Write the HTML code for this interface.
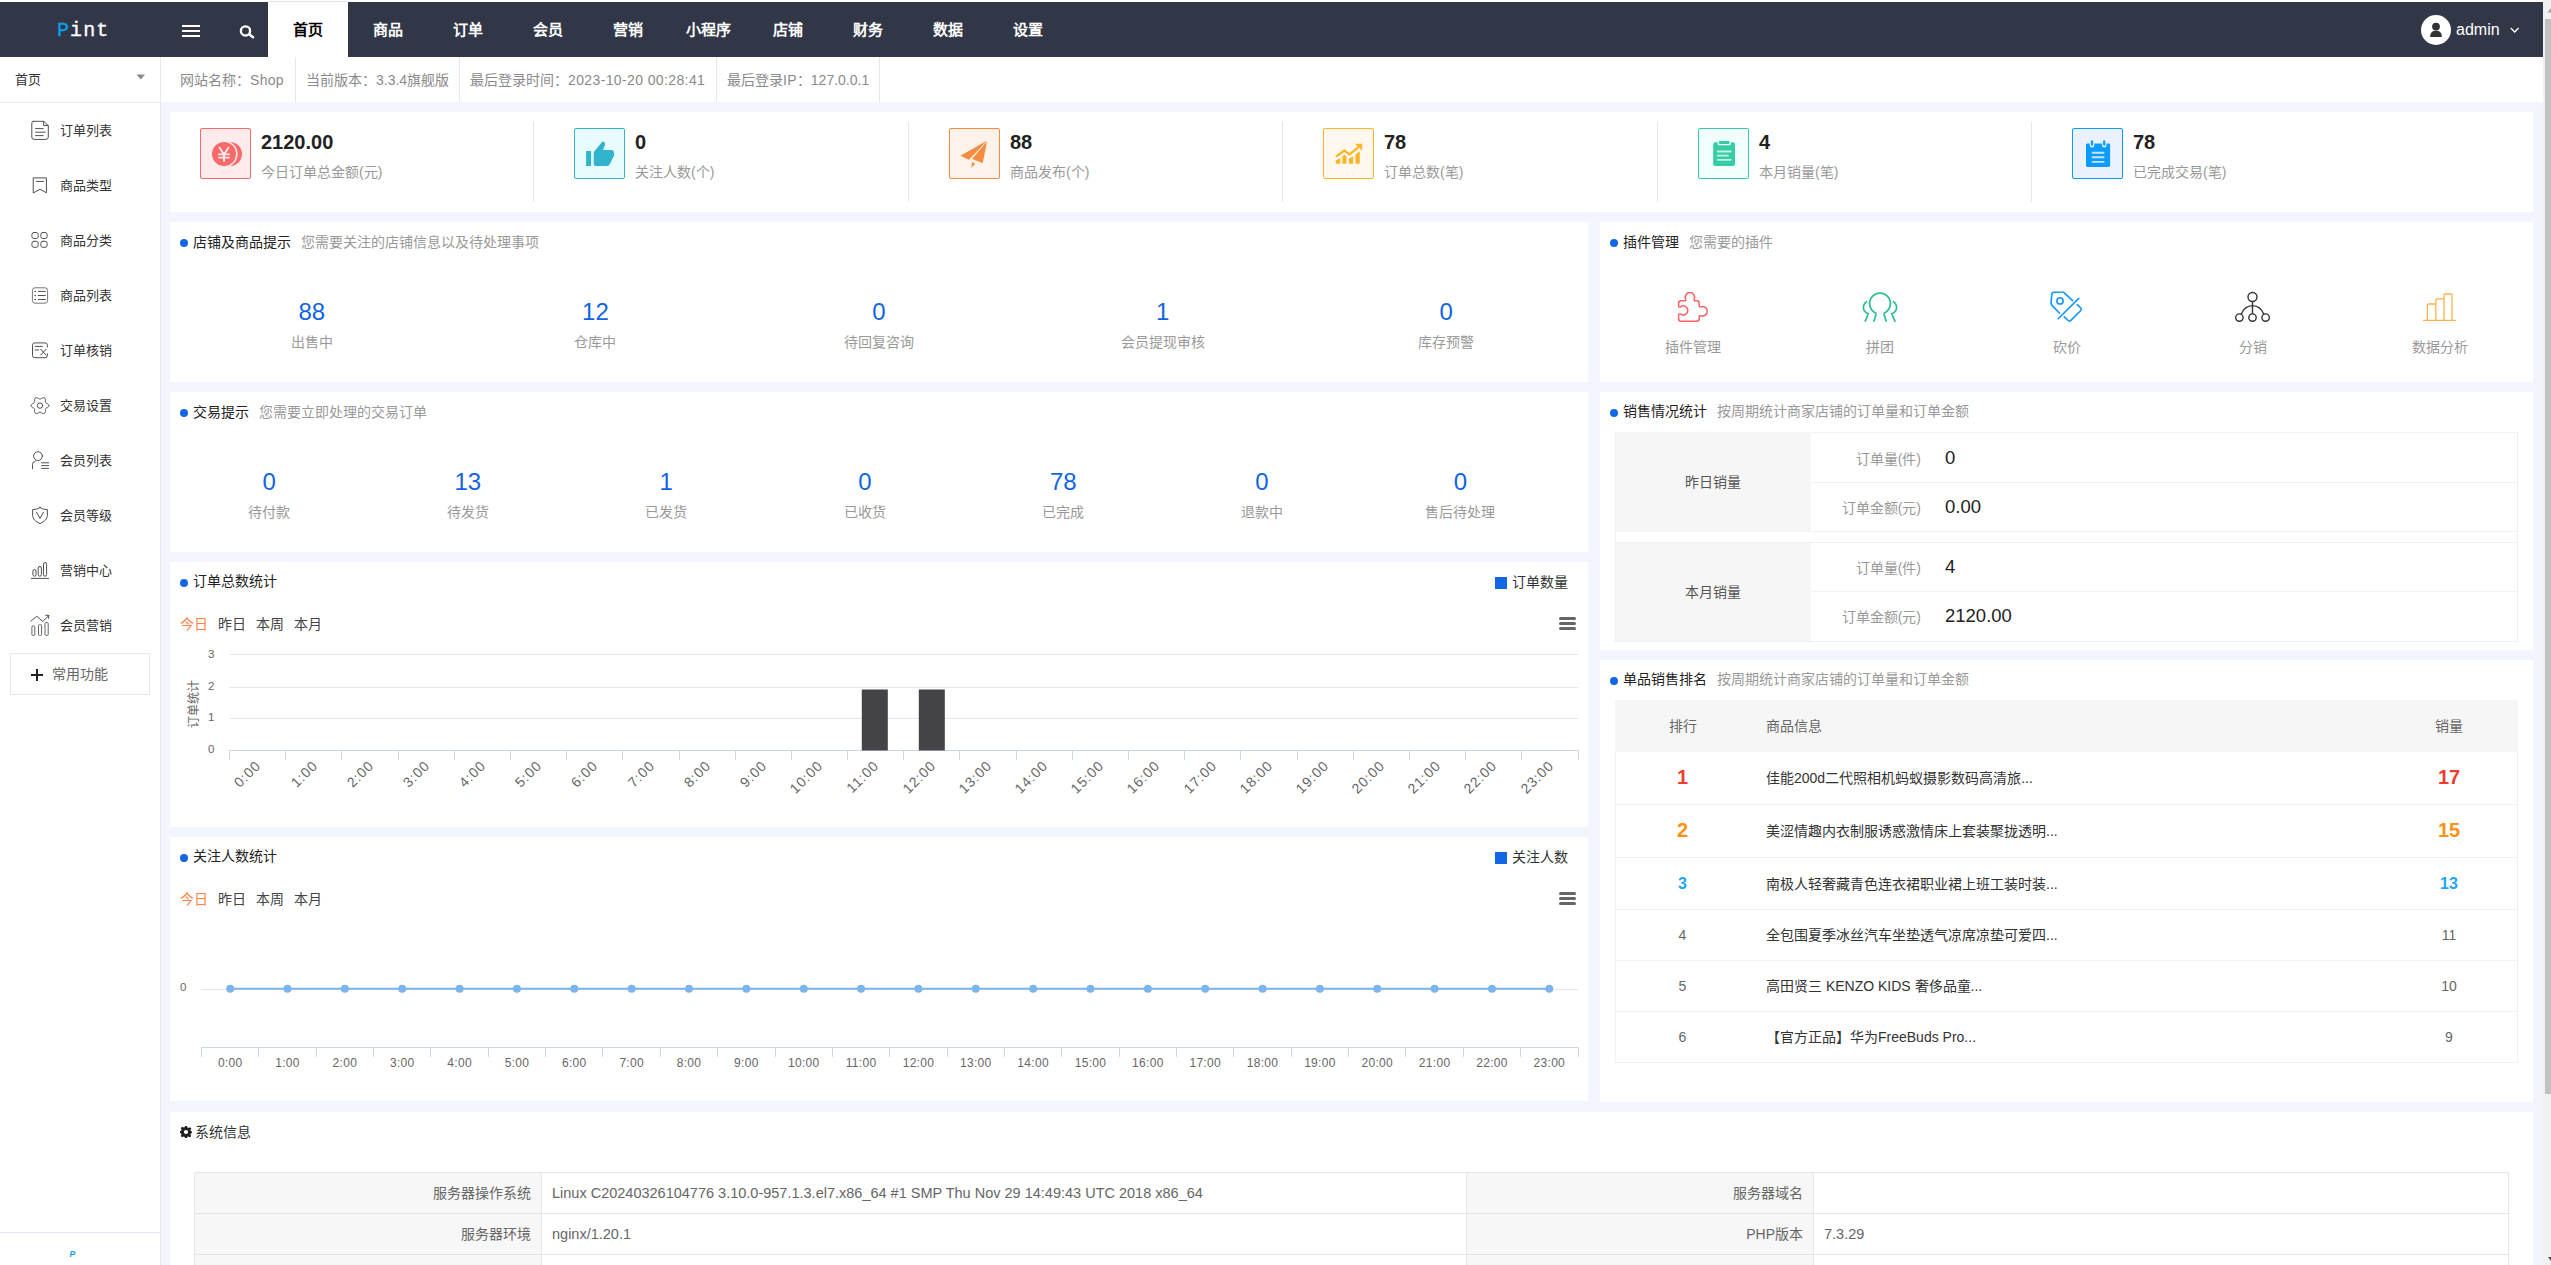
<!DOCTYPE html>
<html lang="zh-CN">
<head>
<meta charset="utf-8">
<title>Pint</title>
<style>
html,body{margin:0;padding:0;}
html{width:2551px;height:1265px;}
body{width:2551px;height:1265px;position:relative;background:#f2f5fd;font-family:"Liberation Sans",sans-serif;}
.t{position:absolute;white-space:nowrap;}
.r{position:absolute;}
svg{position:absolute;overflow:visible;}
i{display:inline-block;width:1em;text-align:center;font-style:normal;}
.mono{font-family:"Liberation Mono",monospace;}
</style>
</head>
<body>
<div class="r" style="left:0px;top:0px;width:2551px;height:2px;background:#fff;"></div>
<div class="r" style="left:0px;top:2px;width:2543px;height:55px;background:#323748;"></div>
<div class="r" style="left:268px;top:1px;width:80px;height:1px;background:#e2e4e3;"></div>
<div class="r" style="left:268px;top:2px;width:80px;height:55px;background:#fff;"></div>
<div class="t mono" style="left:57px;top:18.6px;font-size:20px;line-height:24px;letter-spacing:1.1px;color:#fff;-webkit-text-stroke:0.35px #fff;"><span style="color:#0aa1e6;-webkit-text-stroke:0.3px #0aa1e6;">P</span>int</div>
<div class="r" style="left:182px;top:25px;width:18px;height:2px;background:#fff;"></div>
<div class="r" style="left:182px;top:30px;width:18px;height:2px;background:#fff;"></div>
<div class="r" style="left:182px;top:35px;width:18px;height:2px;background:#fff;"></div>
<svg style="left:238px;top:23px" width="18" height="18" viewBox="0 0 18 18"><circle cx="7.5" cy="7.9" r="4.6" fill="none" stroke="#fff" stroke-width="2.3"/><path d="M11.3 11.3 L15 14.2" stroke="#fff" stroke-width="2.6" stroke-linecap="round"/></svg>
<div class="t" style="left:268.0px;top:19.5px;font-size:15px;line-height:20px;color:#000;font-weight:bold;width:80px;text-align:center;"><i>首</i><i>页</i></div>
<div class="t" style="left:348.0px;top:19.5px;font-size:15px;line-height:20px;color:#fff;font-weight:bold;width:80px;text-align:center;"><i>商</i><i>品</i></div>
<div class="t" style="left:428.0px;top:19.5px;font-size:15px;line-height:20px;color:#fff;font-weight:bold;width:80px;text-align:center;"><i>订</i><i>单</i></div>
<div class="t" style="left:508.0px;top:19.5px;font-size:15px;line-height:20px;color:#fff;font-weight:bold;width:80px;text-align:center;"><i>会</i><i>员</i></div>
<div class="t" style="left:588.0px;top:19.5px;font-size:15px;line-height:20px;color:#fff;font-weight:bold;width:80px;text-align:center;"><i>营</i><i>销</i></div>
<div class="t" style="left:668.0px;top:19.5px;font-size:15px;line-height:20px;color:#fff;font-weight:bold;width:80px;text-align:center;"><i>小</i><i>程</i><i>序</i></div>
<div class="t" style="left:748.0px;top:19.5px;font-size:15px;line-height:20px;color:#fff;font-weight:bold;width:80px;text-align:center;"><i>店</i><i>铺</i></div>
<div class="t" style="left:828.0px;top:19.5px;font-size:15px;line-height:20px;color:#fff;font-weight:bold;width:80px;text-align:center;"><i>财</i><i>务</i></div>
<div class="t" style="left:908.0px;top:19.5px;font-size:15px;line-height:20px;color:#fff;font-weight:bold;width:80px;text-align:center;"><i>数</i><i>据</i></div>
<div class="t" style="left:988.0px;top:19.5px;font-size:15px;line-height:20px;color:#fff;font-weight:bold;width:80px;text-align:center;"><i>设</i><i>置</i></div>
<svg style="left:2421px;top:15px" width="30" height="30" viewBox="0 0 30 30"><circle cx="15" cy="15" r="15" fill="#fff"/><circle cx="15" cy="11.6" r="3.9" fill="#333"/><path d="M9.2 22 C9.2 17.2 11.5 15.8 15 15.8 C18.5 15.8 20.8 17.2 20.8 22 Z" fill="#333"/></svg>
<div class="t" style="left:2456px;top:19.5px;font-size:16px;line-height:20px;color:#fff;">admin</div>
<svg style="left:2510px;top:27px" width="10" height="7" viewBox="0 0 10 7"><path d="M0.8 1 L4.7 5 L8.6 1" fill="none" stroke="#fff" stroke-width="1.3"/></svg>
<div class="r" style="left:2543px;top:0px;width:8px;height:1265px;background:#f1f1f1;"></div>
<div class="r" style="left:2545px;top:19px;width:6px;height:1075px;background:#c1c1c1;"></div>
<svg style="left:2543px;top:0" width="8" height="1265" viewBox="0 0 8 1265"><path d="M8 8 L4.5 12.5 L8 12.5 Z" fill="#a3a3a3"/><path d="M5 1257 L8 1257 L8 1261 Z" fill="#505050"/></svg>
<div class="r" style="left:0px;top:57px;width:160px;height:1208px;background:#fff;"></div>
<div class="r" style="left:160px;top:57px;width:1px;height:1208px;background:#e6e8ee;"></div>
<div class="r" style="left:0px;top:102px;width:160px;height:1px;background:#ececec;"></div>
<div class="t" style="left:15px;top:69.5px;font-size:13px;line-height:20px;color:#333;"><i>首</i><i>页</i></div>
<svg style="left:136px;top:74px" width="10" height="6" viewBox="0 0 10 6"><path d="M0.5 0.6 L9 0.6 L4.75 5.4 Z" fill="#8a8a8a"/></svg>
<div class="t" style="left:60px;top:121px;font-size:13px;line-height:20px;color:#333;"><i>订</i><i>单</i><i>列</i><i>表</i></div>
<div class="t" style="left:60px;top:176px;font-size:13px;line-height:20px;color:#333;"><i>商</i><i>品</i><i>类</i><i>型</i></div>
<div class="t" style="left:60px;top:231px;font-size:13px;line-height:20px;color:#333;"><i>商</i><i>品</i><i>分</i><i>类</i></div>
<div class="t" style="left:60px;top:286px;font-size:13px;line-height:20px;color:#333;"><i>商</i><i>品</i><i>列</i><i>表</i></div>
<div class="t" style="left:60px;top:341px;font-size:13px;line-height:20px;color:#333;"><i>订</i><i>单</i><i>核</i><i>销</i></div>
<div class="t" style="left:60px;top:396px;font-size:13px;line-height:20px;color:#333;"><i>交</i><i>易</i><i>设</i><i>置</i></div>
<div class="t" style="left:60px;top:451px;font-size:13px;line-height:20px;color:#333;"><i>会</i><i>员</i><i>列</i><i>表</i></div>
<div class="t" style="left:60px;top:506px;font-size:13px;line-height:20px;color:#333;"><i>会</i><i>员</i><i>等</i><i>级</i></div>
<div class="t" style="left:60px;top:561px;font-size:13px;line-height:20px;color:#333;"><i>营</i><i>销</i><i>中</i><i>心</i></div>
<div class="t" style="left:60px;top:616px;font-size:13px;line-height:20px;color:#333;"><i>会</i><i>员</i><i>营</i><i>销</i></div>
<svg style="left:0;top:0" width="160" height="700" viewBox="0 0 160 700"><path fill="none" stroke="#505050" stroke-width="1" stroke-linecap="round" stroke-linejoin="round" d="M33.6 121.3 H43.6 L48.3 125.6 V137 Q48.3 139.4 45.9 139.4 H34.2 Q31.8 139.4 31.8 137 V123.2 Q31.8 121.3 33.6 121.3 Z M43.6 121.5 V125.5 H48.2 M35.6 128.6 H43.2 M35.6 132.2 H45.2 M35.6 135.6 H43.2"/><path fill="none" stroke="#505050" stroke-width="1" stroke-linecap="round" stroke-linejoin="round" stroke-linejoin="miter" d="M33.6 177.9 H46.4 V192.8 L40 189.2 L33.6 192.8 Z M36.6 181.4 H43.4"/><rect fill="none" stroke="#505050" stroke-width="1" stroke-linecap="round" stroke-linejoin="round" x="31.9" y="232.5" width="6.3" height="6" rx="2" ry="2"/><rect fill="none" stroke="#505050" stroke-width="1" stroke-linecap="round" stroke-linejoin="round" x="40.8" y="232.5" width="6.3" height="6" rx="2" ry="2"/><rect fill="none" stroke="#505050" stroke-width="1" stroke-linecap="round" stroke-linejoin="round" x="31.9" y="241.3" width="6.3" height="6" rx="2" ry="2"/><rect fill="none" stroke="#505050" stroke-width="1" stroke-linecap="round" stroke-linejoin="round" x="40.8" y="241.3" width="6.3" height="6" rx="2" ry="2"/><rect fill="none" stroke="#777" stroke-width="1" x="32.4" y="287.8" width="15.2" height="15.4" rx="2.6"/><path fill="none" stroke="#505050" stroke-width="1" stroke-linecap="round" stroke-linejoin="round" d="M38.2 291.4 H45.4 M38.2 295.5 H45.4 M38.2 299.5 H45.4"/><circle cx="35.2" cy="291.4" r="0.75" fill="#3c3c3c"/><circle cx="35.2" cy="295.5" r="0.75" fill="#3c3c3c"/><circle cx="35.2" cy="299.5" r="0.75" fill="#3c3c3c"/><path fill="none" stroke="#505050" stroke-width="1" stroke-linecap="round" stroke-linejoin="round" d="M47.4 347 V345.2 Q47.4 342.9 45 342.9 H34.9 Q32.5 342.9 32.5 345.2 V355.4 Q32.5 357.7 34.9 357.7 H45 Q47.4 357.7 47.4 355.4 V353.9 M35.2 346.4 H42.4 M35.2 350 H38.6 M40.6 349.2 L46.1 355.1 M46.1 349.2 L40.6 355.1"/><polygon fill="none" stroke="#505050" stroke-width="1" stroke-linecap="round" stroke-linejoin="round" points="48.95,405.60 48.82,406.22 48.45,406.79 47.91,407.28 47.28,407.69 46.65,408.02 46.11,408.32 45.72,408.64 45.49,409.03 45.41,409.53 45.42,410.15 45.44,410.86 45.41,411.61 45.26,412.33 44.94,412.93 44.48,413.35 43.88,413.55 43.20,413.51 42.50,413.29 41.83,412.94 41.23,412.57 40.70,412.25 40.23,412.07 39.77,412.07 39.30,412.25 38.77,412.57 38.17,412.94 37.50,413.29 36.80,413.51 36.12,413.55 35.53,413.35 35.06,412.93 34.74,412.33 34.59,411.61 34.56,410.86 34.58,410.15 34.59,409.53 34.51,409.03 34.28,408.64 33.89,408.32 33.35,408.02 32.72,407.69 32.09,407.28 31.55,406.79 31.18,406.22 31.05,405.60 31.18,404.98 31.55,404.41 32.09,403.92 32.72,403.51 33.35,403.18 33.89,402.88 34.28,402.56 34.51,402.17 34.59,401.67 34.58,401.05 34.56,400.34 34.59,399.59 34.74,398.87 35.06,398.27 35.52,397.85 36.12,397.65 36.80,397.69 37.50,397.91 38.17,398.26 38.77,398.63 39.30,398.95 39.77,399.13 40.23,399.13 40.70,398.95 41.23,398.63 41.83,398.26 42.50,397.91 43.20,397.69 43.88,397.65 44.48,397.85 44.94,398.27 45.26,398.87 45.41,399.59 45.44,400.34 45.42,401.05 45.41,401.67 45.49,402.17 45.72,402.56 46.11,402.88 46.65,403.18 47.28,403.51 47.91,403.92 48.45,404.41 48.82,404.98"/><circle fill="none" stroke="#505050" stroke-width="1" stroke-linecap="round" stroke-linejoin="round" cx="40" cy="405.6" r="2.7"/><circle fill="none" stroke="#505050" stroke-width="1" stroke-linecap="round" stroke-linejoin="round" cx="38" cy="456.1" r="4.4"/><path fill="none" stroke="#505050" stroke-width="1" stroke-linecap="round" stroke-linejoin="round" d="M32.5 468.7 V464.6 Q32.5 461.3 35.3 461.1 M41.6 462.8 H48.6 M41.6 465.6 H48.6 M41.6 468.4 H48.6"/><path fill="none" stroke="#505050" stroke-width="1" stroke-linecap="round" stroke-linejoin="round" d="M40 507.6 Q42.6 509.5 47.4 509.6 V515.5 Q47.2 520.5 40 523.6 Q32.8 520.5 32.6 515.5 V509.6 Q37.4 509.5 40 507.6 Z M36.6 512.3 L40 518.4 L43.4 512.3"/><path fill="none" stroke="#505050" stroke-width="1" stroke-linecap="round" stroke-linejoin="round" stroke-width="1.3" d="M31.4 578.4 H48.6"/><rect fill="none" stroke="#505050" stroke-width="1" stroke-linecap="round" stroke-linejoin="round" x="32.9" y="569.5" width="3.1" height="6.7" rx="1.55"/><rect fill="none" stroke="#505050" stroke-width="1" stroke-linecap="round" stroke-linejoin="round" x="38.2" y="566.5" width="3.2" height="9.7" rx="1.55"/><rect fill="none" stroke="#505050" stroke-width="1" stroke-linecap="round" stroke-linejoin="round" x="43.5" y="562.5" width="3.1" height="13.7" rx="1.55"/><rect fill="none" stroke="#666" stroke-width="1" x="31.9" y="626" width="2.9" height="9.4" rx="0.8"/><rect fill="none" stroke="#666" stroke-width="1" x="38.5" y="624.7" width="3.1" height="10.7" rx="0.8"/><rect fill="none" stroke="#666" stroke-width="1" x="45" y="622.6" width="3.2" height="12.8" rx="0.8"/><path fill="none" stroke="#505050" stroke-width="1" stroke-linecap="round" stroke-linejoin="round" stroke-width="1" d="M30.9 621.1 L36.8 616.3 L42.8 621.5 L48.7 615.6 M45.6 615.3 L48.9 615.4 L48.5 618.4"/></svg>
<div class="r" style="left:10px;top:653px;width:138px;height:40px;background:#fff;border:1px solid #e4e7f0;"></div>
<div class="r" style="left:31px;top:674px;width:12px;height:2px;background:#222;"></div>
<div class="r" style="left:36px;top:669px;width:2px;height:12px;background:#222;"></div>
<div class="t" style="left:52px;top:663.8px;font-size:14px;line-height:20px;color:#666;"><i>常</i><i>用</i><i>功</i><i>能</i></div>
<div class="r" style="left:0px;top:1232px;width:160px;height:1px;background:#e4e8f0;"></div>
<div class="t" style="left:69.5px;top:1248px;font-size:8.5px;line-height:12px;font-weight:bold;font-style:italic;color:#10a0dc;">P</div>
<div class="r" style="left:161px;top:57px;width:2382px;height:45px;background:#fff;"></div>
<div class="t" style="left:180px;top:69.5px;font-size:14px;line-height:20px;color:#8a8a8a;"><i>网</i><i>站</i><i>名</i><i>称</i><i>：</i><span style="letter-spacing:0.3px">Shop</span></div>
<div class="t" style="left:306px;top:69.5px;font-size:14px;line-height:20px;color:#8a8a8a;"><i>当</i><i>前</i><i>版</i><i>本</i><i>：</i>3.3.4<i>旗</i><i>舰</i><i>版</i></div>
<div class="t" style="left:470px;top:69.5px;font-size:14px;line-height:20px;color:#8a8a8a;"><i>最</i><i>后</i><i>登</i><i>录</i><i>时</i><i>间</i><i>：</i><span style="letter-spacing:0.38px">2023-10-20 00:28:41</span></div>
<div class="t" style="left:727px;top:69.5px;font-size:14px;line-height:20px;color:#8a8a8a;"><i>最</i><i>后</i><i>登</i><i>录</i><span style="letter-spacing:0.3px">IP</span><i>：</i>127.0.0.1</div>
<div class="r" style="left:295px;top:57px;width:1px;height:45px;background:#e6e6e6;"></div>
<div class="r" style="left:459px;top:57px;width:1px;height:45px;background:#e6e6e6;"></div>
<div class="r" style="left:716px;top:57px;width:1px;height:45px;background:#e6e6e6;"></div>
<div class="r" style="left:879px;top:57px;width:1px;height:45px;background:#e6e6e6;"></div>
<div class="r" style="left:170px;top:112px;width:2363px;height:100px;background:#fff;"></div>
<div class="r" style="left:200px;top:128px;width:49px;height:49px;background:#ffebeb;border:1px solid #f96a6a;border-radius:2px;"></div>
<svg style="left:200px;top:128px" width="51" height="51" viewBox="0 0 51 51"><circle cx="30" cy="26" r="12" fill="#f96a6a"/><circle cx="24" cy="26" r="13.6" fill="#ffebeb"/><circle cx="24" cy="26" r="12" fill="#f96a6a"/>
<path d="M19.6 19.8 L24 26.6 L28.4 19.8 M19 26.4 H29 M19 29.6 H29 M24 26.6 V33" fill="none" stroke="#ffebeb" stroke-width="1.9" stroke-linecap="round"/></svg>
<div class="t" style="left:261px;top:130px;font-size:20px;line-height:24px;color:#222;font-weight:bold;">2120.00</div>
<div class="t" style="left:261px;top:162px;font-size:14px;line-height:20px;color:#999;"><i>今</i><i>日</i><i>订</i><i>单</i><i>总</i><i>金</i><i>额</i>(<i>元</i>)</div>
<div class="r" style="left:574px;top:128px;width:49px;height:49px;background:#e8fbff;border:1px solid #33b4ce;border-radius:2px;"></div>
<svg style="left:574px;top:128px" width="51" height="51" viewBox="0 0 51 51"><rect x="12.1" y="23" width="5" height="15" fill="#33b4ce"/>
<path d="M19.7 25.2 Q19.7 24 20.6 23 L28 14 Q29.4 12.6 30.6 14.4 Q31.4 15.6 31 17 L29 22 H37.4 Q40 22.2 40 25 V26.6 Q40 27.6 39.6 28.4 L35.6 36.6 Q34.8 38 33 38 H22.4 Q19.7 38 19.7 35.4 Z" fill="#33b4ce"/></svg>
<div class="t" style="left:635px;top:130px;font-size:20px;line-height:24px;color:#222;font-weight:bold;">0</div>
<div class="t" style="left:635px;top:162px;font-size:14px;line-height:20px;color:#999;"><i>关</i><i>注</i><i>人</i><i>数</i>(<i>个</i>)</div>
<div class="r" style="left:533px;top:122px;width:1px;height:80px;background:#e6e6e6;"></div>
<div class="r" style="left:949px;top:128px;width:49px;height:49px;background:#fff2ea;border:1px solid #f88b3d;border-radius:2px;"></div>
<svg style="left:949px;top:128px" width="51" height="51" viewBox="0 0 51 51"><path d="M38 12.8 L11.4 27.8 L19.9 31.7 Z" fill="#f88b3d"/><path d="M38.1 13.2 L23.1 31.1 L33.7 35 Z" fill="#f88b3d"/><path d="M23 33.9 L26.2 35.8 L22.4 39.7 Z" fill="#f88b3d"/></svg>
<div class="t" style="left:1010px;top:130px;font-size:20px;line-height:24px;color:#222;font-weight:bold;">88</div>
<div class="t" style="left:1010px;top:162px;font-size:14px;line-height:20px;color:#999;"><i>商</i><i>品</i><i>发</i><i>布</i>(<i>个</i>)</div>
<div class="r" style="left:908px;top:122px;width:1px;height:80px;background:#e6e6e6;"></div>
<div class="r" style="left:1323px;top:128px;width:49px;height:49px;background:#fff8ee;border:1px solid #fdb528;border-radius:2px;"></div>
<svg style="left:1323px;top:128px" width="51" height="51" viewBox="0 0 51 51"><path d="M12.8 32.4 L17.3 30 V35.8 H12.8 Z M19.4 28.4 L21.45 26.6 L23.5 28.4 V35.8 H19.4 Z M25.9 30.6 L30.1 28.4 V35.8 H25.9 Z M32.5 26.3 L36.8 23.2 V35.8 H32.5 Z" fill="#fdb528"/>
<path d="M12.9 28.6 L21.4 22.5 L26.4 26.4 L35.6 19.2" fill="none" stroke="#fdb528" stroke-width="2.3"/><path d="M31.8 15.8 H39.2 V22.8 Z" fill="#fdb528"/></svg>
<div class="t" style="left:1384px;top:130px;font-size:20px;line-height:24px;color:#222;font-weight:bold;">78</div>
<div class="t" style="left:1384px;top:162px;font-size:14px;line-height:20px;color:#999;"><i>订</i><i>单</i><i>总</i><i>数</i>(<i>笔</i>)</div>
<div class="r" style="left:1282px;top:122px;width:1px;height:80px;background:#e6e6e6;"></div>
<div class="r" style="left:1698px;top:128px;width:49px;height:49px;background:#f0fffb;border:1px solid #35cca6;border-radius:2px;"></div>
<svg style="left:1698px;top:128px" width="51" height="51" viewBox="0 0 51 51"><rect x="15.2" y="14.2" width="21.8" height="23.8" rx="2.2" fill="#35cca6"/><rect x="19.6" y="12.4" width="13.2" height="4.8" rx="1.2" fill="#f0fffb"/><rect x="20.7" y="13" width="11" height="3" rx="1.4" fill="#35cca6"/>
<path d="M19.6 23.5 H32.8 M19.6 27.7 H30 M19.6 31.8 H32.8" stroke="#c4f2e5" stroke-width="1.8" stroke-linecap="round"/></svg>
<div class="t" style="left:1759px;top:130px;font-size:20px;line-height:24px;color:#222;font-weight:bold;">4</div>
<div class="t" style="left:1759px;top:162px;font-size:14px;line-height:20px;color:#999;"><i>本</i><i>月</i><i>销</i><i>量</i>(<i>笔</i>)</div>
<div class="r" style="left:1657px;top:122px;width:1px;height:80px;background:#e6e6e6;"></div>
<div class="r" style="left:2072px;top:128px;width:49px;height:49px;background:#eaf2ff;border:1px solid #0c9cff;border-radius:2px;"></div>
<svg style="left:2072px;top:128px" width="51" height="51" viewBox="0 0 51 51"><rect x="14" y="15.4" width="24.1" height="23.5" rx="1.4" fill="#0c9cff"/>
<path d="M20 12.8 V17.2 M32.2 12.8 V17.2" stroke="#eaf2ff" stroke-width="4.6" stroke-linecap="round"/><path d="M20 13.4 V16.8 M32.2 13.4 V16.8" stroke="#0c9cff" stroke-width="2.3" stroke-linecap="round"/>
<path d="M20.6 24.7 H31.6 M20.6 29.3 H31.6 M20.6 33.9 H31.6" stroke="#c6e4ff" stroke-width="1.9" stroke-linecap="round"/></svg>
<div class="t" style="left:2133px;top:130px;font-size:20px;line-height:24px;color:#222;font-weight:bold;">78</div>
<div class="t" style="left:2133px;top:162px;font-size:14px;line-height:20px;color:#999;"><i>已</i><i>完</i><i>成</i><i>交</i><i>易</i>(<i>笔</i>)</div>
<div class="r" style="left:2031px;top:122px;width:1px;height:80px;background:#e6e6e6;"></div>
<div class="r" style="left:170px;top:222px;width:1418px;height:160px;background:#fff;"></div>
<div class="r" style="left:180px;top:239px;width:8px;height:8px;border-radius:50%;background:#1366e6;"></div>
<div class="t" style="left:192.5px;top:231.9px;font-size:14px;line-height:20px;color:#222;"><i>店</i><i>铺</i><i>及</i><i>商</i><i>品</i><i>提</i><i>示</i></div>
<div class="t" style="left:301.0px;top:231.9px;font-size:14px;line-height:20px;color:#999;"><i>您</i><i>需</i><i>要</i><i>关</i><i>注</i><i>的</i><i>店</i><i>铺</i><i>信</i><i>息</i><i>以</i><i>及</i><i>待</i><i>处</i><i>理</i><i>事</i><i>项</i></div>
<div class="t" style="left:161.8px;top:296.5px;font-size:24px;line-height:30px;color:#1163e6;width:300px;text-align:center;">88</div>
<div class="t" style="left:161.8px;top:332px;font-size:14px;line-height:20px;color:#999;width:300px;text-align:center;"><i>出</i><i>售</i><i>中</i></div>
<div class="t" style="left:445.4000000000001px;top:296.5px;font-size:24px;line-height:30px;color:#1163e6;width:300px;text-align:center;">12</div>
<div class="t" style="left:445.4000000000001px;top:332px;font-size:14px;line-height:20px;color:#999;width:300px;text-align:center;"><i>仓</i><i>库</i><i>中</i></div>
<div class="t" style="left:729.0px;top:296.5px;font-size:24px;line-height:30px;color:#1163e6;width:300px;text-align:center;">0</div>
<div class="t" style="left:729.0px;top:332px;font-size:14px;line-height:20px;color:#999;width:300px;text-align:center;"><i>待</i><i>回</i><i>复</i><i>咨</i><i>询</i></div>
<div class="t" style="left:1012.6000000000001px;top:296.5px;font-size:24px;line-height:30px;color:#1163e6;width:300px;text-align:center;">1</div>
<div class="t" style="left:1012.6000000000001px;top:332px;font-size:14px;line-height:20px;color:#999;width:300px;text-align:center;"><i>会</i><i>员</i><i>提</i><i>现</i><i>审</i><i>核</i></div>
<div class="t" style="left:1296.2px;top:296.5px;font-size:24px;line-height:30px;color:#1163e6;width:300px;text-align:center;">0</div>
<div class="t" style="left:1296.2px;top:332px;font-size:14px;line-height:20px;color:#999;width:300px;text-align:center;"><i>库</i><i>存</i><i>预</i><i>警</i></div>
<div class="r" style="left:170px;top:392px;width:1418px;height:160px;background:#fff;"></div>
<div class="r" style="left:180px;top:409px;width:8px;height:8px;border-radius:50%;background:#1366e6;"></div>
<div class="t" style="left:192.5px;top:401.9px;font-size:14px;line-height:20px;color:#222;"><i>交</i><i>易</i><i>提</i><i>示</i></div>
<div class="t" style="left:259.0px;top:401.9px;font-size:14px;line-height:20px;color:#999;"><i>您</i><i>需</i><i>要</i><i>立</i><i>即</i><i>处</i><i>理</i><i>的</i><i>交</i><i>易</i><i>订</i><i>单</i></div>
<div class="t" style="left:119.25999999999999px;top:466.5px;font-size:24px;line-height:30px;color:#1163e6;width:300px;text-align:center;">0</div>
<div class="t" style="left:119.25999999999999px;top:502px;font-size:14px;line-height:20px;color:#999;width:300px;text-align:center;"><i>待</i><i>付</i><i>款</i></div>
<div class="t" style="left:317.78000000000003px;top:466.5px;font-size:24px;line-height:30px;color:#1163e6;width:300px;text-align:center;">13</div>
<div class="t" style="left:317.78000000000003px;top:502px;font-size:14px;line-height:20px;color:#999;width:300px;text-align:center;"><i>待</i><i>发</i><i>货</i></div>
<div class="t" style="left:516.3px;top:466.5px;font-size:24px;line-height:30px;color:#1163e6;width:300px;text-align:center;">1</div>
<div class="t" style="left:516.3px;top:502px;font-size:14px;line-height:20px;color:#999;width:300px;text-align:center;"><i>已</i><i>发</i><i>货</i></div>
<div class="t" style="left:714.82px;top:466.5px;font-size:24px;line-height:30px;color:#1163e6;width:300px;text-align:center;">0</div>
<div class="t" style="left:714.82px;top:502px;font-size:14px;line-height:20px;color:#999;width:300px;text-align:center;"><i>已</i><i>收</i><i>货</i></div>
<div class="t" style="left:913.3400000000001px;top:466.5px;font-size:24px;line-height:30px;color:#1163e6;width:300px;text-align:center;">78</div>
<div class="t" style="left:913.3400000000001px;top:502px;font-size:14px;line-height:20px;color:#999;width:300px;text-align:center;"><i>已</i><i>完</i><i>成</i></div>
<div class="t" style="left:1111.8600000000001px;top:466.5px;font-size:24px;line-height:30px;color:#1163e6;width:300px;text-align:center;">0</div>
<div class="t" style="left:1111.8600000000001px;top:502px;font-size:14px;line-height:20px;color:#999;width:300px;text-align:center;"><i>退</i><i>款</i><i>中</i></div>
<div class="t" style="left:1310.38px;top:466.5px;font-size:24px;line-height:30px;color:#1163e6;width:300px;text-align:center;">0</div>
<div class="t" style="left:1310.38px;top:502px;font-size:14px;line-height:20px;color:#999;width:300px;text-align:center;"><i>售</i><i>后</i><i>待</i><i>处</i><i>理</i></div>
<div class="r" style="left:1600px;top:222px;width:933px;height:160px;background:#fff;"></div>
<div class="r" style="left:1610px;top:239px;width:8px;height:8px;border-radius:50%;background:#1366e6;"></div>
<div class="t" style="left:1622.5px;top:231.9px;font-size:14px;line-height:20px;color:#222;"><i>插</i><i>件</i><i>管</i><i>理</i></div>
<div class="t" style="left:1689.0px;top:231.9px;font-size:14px;line-height:20px;color:#999;"><i>您</i><i>需</i><i>要</i><i>的</i><i>插</i><i>件</i></div>
<div class="t" style="left:1613.3px;top:337px;font-size:14px;line-height:20px;color:#999;width:160px;text-align:center;"><i>插</i><i>件</i><i>管</i><i>理</i></div>
<div class="t" style="left:1799.9px;top:337px;font-size:14px;line-height:20px;color:#999;width:160px;text-align:center;"><i>拼</i><i>团</i></div>
<div class="t" style="left:1986.5px;top:337px;font-size:14px;line-height:20px;color:#999;width:160px;text-align:center;"><i>砍</i><i>价</i></div>
<div class="t" style="left:2173.1px;top:337px;font-size:14px;line-height:20px;color:#999;width:160px;text-align:center;"><i>分</i><i>销</i></div>
<div class="t" style="left:2359.7px;top:337px;font-size:14px;line-height:20px;color:#999;width:160px;text-align:center;"><i>数</i><i>据</i><i>分</i><i>析</i></div>
<svg style="left:0;top:0" width="2551" height="400" viewBox="0 0 2551 400"><path transform="translate(1676,290)" fill="none" stroke="#fa5f62" stroke-width="1.5" stroke-linejoin="round" d="M5 10.8 H8.8 Q10.4 10.8 9.52 8.95 A4.7 4.7 0 1 1 18.28 8.95 Q17.4 10.8 19 10.8 H20.8 Q23.2 10.8 23.2 13.2 V15.6 Q23.2 17.2 24.9 16.92 A4.7 4.7 0 1 1 24.9 25.68 Q23.2 25.4 23.2 27 V28.8 Q23.2 31.2 20.8 31.2 H5 Q2.6 31.2 2.6 28.8 V25.6 Q2.6 23.2 4.6 24.2 A4.5 4.5 0 1 0 4.6 16.8 Q2.6 17.8 2.6 15.6 V13.2 Q2.6 10.8 5 10.8 Z"/><path fill="none" stroke="#2dbf99" stroke-width="1.75" stroke-linecap="butt" d="M1876.4 313.2 A10.4 10.4 0 1 1 1883.6 313.2 M1876.2 313.6 L1873.8 321.8 M1883.8 313.6 L1886.3 321.8 M1867 301.6 Q1863.4 303.8 1863.4 307.8 Q1863.6 312 1868.2 313.8 L1865 321.8 M1893 301.6 Q1896.6 303.8 1896.6 307.8 Q1896.4 312 1891.8 313.8 L1895.2 321.8"/><path fill="none" stroke="#1296ff" stroke-width="1.6" stroke-linecap="round" stroke-linejoin="round" d="M2072.6 300.6 L2064.3 292.8 Q2063.3 291.9 2062 292 L2053.4 292.4 Q2052 292.5 2051.9 293.9 L2051 303 Q2050.9 304.2 2051.8 305.1 L2059.6 313.2 M2078.8 298.4 L2058.2 318.8 M2077.3 304.7 L2080.8 308 Q2082 309.2 2080.8 310.5 L2070.6 320.6 Q2069.4 321.6 2068.2 320.5 L2064.3 316.9"/><circle cx="2060" cy="300.9" r="3.1" fill="none" stroke="#1296ff" stroke-width="1.6"/><g fill="none" stroke="#333" stroke-width="1.4"><circle cx="2252.5" cy="297" r="4.5"/><circle cx="2239.4" cy="317.6" r="3.7"/><circle cx="2252.5" cy="317.6" r="3.7"/><circle cx="2265.6" cy="317.6" r="3.7"/><path d="M2252.5 301.5 V313.9 M2241.2 314.2 Q2244.5 305.8 2252.5 305.6 Q2260.5 305.8 2263.8 314.2"/></g><path fill="none" stroke="#fdb14b" stroke-width="1.3" stroke-linejoin="round" d="M2423 320.3 H2455.8 M2427.4 320 V305.4 Q2427.4 304 2428.8 304 H2435.8 V320 M2435.8 304 V300.2 Q2435.8 298.8 2437.2 298.8 H2444 V320 M2444 298.8 V295.4 Q2444 294 2445.4 294 H2450.6 Q2452 294 2452 295.4 V320"/></svg>
<div class="r" style="left:1600px;top:392px;width:933px;height:258px;background:#fff;"></div>
<div class="r" style="left:1610px;top:408.5px;width:8px;height:8px;border-radius:50%;background:#1366e6;"></div>
<div class="t" style="left:1622.5px;top:401.4px;font-size:14px;line-height:20px;color:#222;"><i>销</i><i>售</i><i>情</i><i>况</i><i>统</i><i>计</i></div>
<div class="t" style="left:1717.0px;top:401.4px;font-size:14px;line-height:20px;color:#999;"><i>按</i><i>周</i><i>期</i><i>统</i><i>计</i><i>商</i><i>家</i><i>店</i><i>铺</i><i>的</i><i>订</i><i>单</i><i>量</i><i>和</i><i>订</i><i>单</i><i>金</i><i>额</i></div>
<div class="r" style="left:1615px;top:432px;width:903px;height:1px;background:#f1f1f1;"></div>
<div class="r" style="left:1615px;top:432px;width:196px;height:100px;background:#f6f6f6;"></div>
<div class="r" style="left:1615px;top:543px;width:196px;height:98px;background:#f6f6f6;"></div>
<div class="r" style="left:1811px;top:482px;width:707px;height:1px;background:#f1f1f1;"></div>
<div class="r" style="left:1811px;top:531px;width:707px;height:1px;background:#f1f1f1;"></div>
<div class="r" style="left:1615px;top:542px;width:903px;height:1px;background:#f1f1f1;"></div>
<div class="r" style="left:1811px;top:591px;width:707px;height:1px;background:#f1f1f1;"></div>
<div class="r" style="left:1615px;top:641px;width:903px;height:1px;background:#f1f1f1;"></div>
<div class="r" style="left:1615px;top:432px;width:1px;height:210px;background:#f1f1f1;"></div>
<div class="r" style="left:2517px;top:432px;width:1px;height:210px;background:#f1f1f1;"></div>
<div class="t" style="left:1615.0px;top:472px;font-size:14px;line-height:20px;color:#555;width:196px;text-align:center;"><i>昨</i><i>日</i><i>销</i><i>量</i></div>
<div class="t" style="left:1615.0px;top:581.5px;font-size:14px;line-height:20px;color:#555;width:196px;text-align:center;"><i>本</i><i>月</i><i>销</i><i>量</i></div>
<div class="t" style="left:1521px;top:448.5px;font-size:14px;line-height:20px;color:#999;width:400px;text-align:right;"><i>订</i><i>单</i><i>量</i>(<i>件</i>)</div>
<div class="t" style="left:1945px;top:445.5px;font-size:18.5px;line-height:24px;color:#222;">0</div>
<div class="t" style="left:1521px;top:498px;font-size:14px;line-height:20px;color:#999;width:400px;text-align:right;"><i>订</i><i>单</i><i>金</i><i>额</i>(<i>元</i>)</div>
<div class="t" style="left:1945px;top:495px;font-size:18.5px;line-height:24px;color:#222;">0.00</div>
<div class="t" style="left:1521px;top:557.5px;font-size:14px;line-height:20px;color:#999;width:400px;text-align:right;"><i>订</i><i>单</i><i>量</i>(<i>件</i>)</div>
<div class="t" style="left:1945px;top:554.5px;font-size:18.5px;line-height:24px;color:#222;">4</div>
<div class="t" style="left:1521px;top:606.5px;font-size:14px;line-height:20px;color:#999;width:400px;text-align:right;"><i>订</i><i>单</i><i>金</i><i>额</i>(<i>元</i>)</div>
<div class="t" style="left:1945px;top:603.5px;font-size:18.5px;line-height:24px;color:#222;">2120.00</div>
<div class="r" style="left:1600px;top:660px;width:933px;height:442px;background:#fff;"></div>
<div class="r" style="left:1610px;top:676.5px;width:8px;height:8px;border-radius:50%;background:#1366e6;"></div>
<div class="t" style="left:1622.5px;top:669.4px;font-size:14px;line-height:20px;color:#222;"><i>单</i><i>品</i><i>销</i><i>售</i><i>排</i><i>名</i></div>
<div class="t" style="left:1717.0px;top:669.4px;font-size:14px;line-height:20px;color:#999;"><i>按</i><i>周</i><i>期</i><i>统</i><i>计</i><i>商</i><i>家</i><i>店</i><i>铺</i><i>的</i><i>订</i><i>单</i><i>量</i><i>和</i><i>订</i><i>单</i><i>金</i><i>额</i></div>
<div class="r" style="left:1615px;top:700px;width:903px;height:52px;background:#f6f6f6;"></div>
<div class="t" style="left:1633.0px;top:716px;font-size:14px;line-height:20px;color:#666;width:100px;text-align:center;"><i>排</i><i>行</i></div>
<div class="t" style="left:1766px;top:716px;font-size:14px;line-height:20px;color:#666;"><i>商</i><i>品</i><i>信</i><i>息</i></div>
<div class="t" style="left:2399.0px;top:716px;font-size:14px;line-height:20px;color:#666;width:100px;text-align:center;"><i>销</i><i>量</i></div>
<div class="r" style="left:1615px;top:804px;width:903px;height:1px;background:#f1f1f1;"></div>
<div class="r" style="left:1615px;top:857px;width:903px;height:1px;background:#f1f1f1;"></div>
<div class="r" style="left:1615px;top:909px;width:903px;height:1px;background:#f1f1f1;"></div>
<div class="r" style="left:1615px;top:960px;width:903px;height:1px;background:#f1f1f1;"></div>
<div class="r" style="left:1615px;top:1011px;width:903px;height:1px;background:#f1f1f1;"></div>
<div class="r" style="left:1615px;top:1062px;width:903px;height:1px;background:#f1f1f1;"></div>
<div class="r" style="left:1615px;top:751px;width:1px;height:312px;background:#f1f1f1;"></div>
<div class="r" style="left:2517px;top:751px;width:1px;height:312px;background:#f1f1f1;"></div>
<div class="t" style="left:1632.5px;top:763.7px;font-size:20px;line-height:26px;color:#f03c2e;font-weight:bold;width:100px;text-align:center;">1</div>
<div class="t" style="left:1766px;top:768px;font-size:14px;line-height:20px;color:#333;"><i>佳</i><i>能</i>200d<i>二</i><i>代</i><i>照</i><i>相</i><i>机</i><i>蚂</i><i>蚁</i><i>摄</i><i>影</i><i>数</i><i>码</i><i>高</i><i>清</i><i>旅</i>...</div>
<div class="t" style="left:2399.0px;top:763.7px;font-size:20px;line-height:26px;color:#f03c2e;font-weight:bold;width:100px;text-align:center;">17</div>
<div class="t" style="left:1632.5px;top:816.7px;font-size:20px;line-height:26px;color:#ff9012;font-weight:bold;width:100px;text-align:center;">2</div>
<div class="t" style="left:1766px;top:821px;font-size:14px;line-height:20px;color:#333;"><i>美</i><i>涩</i><i>情</i><i>趣</i><i>内</i><i>衣</i><i>制</i><i>服</i><i>诱</i><i>惑</i><i>激</i><i>情</i><i>床</i><i>上</i><i>套</i><i>装</i><i>聚</i><i>拢</i><i>透</i><i>明</i>...</div>
<div class="t" style="left:2399.0px;top:816.7px;font-size:20px;line-height:26px;color:#ff9012;font-weight:bold;width:100px;text-align:center;">15</div>
<div class="t" style="left:1632.5px;top:870.5px;font-size:16px;line-height:26px;color:#1ea6f0;font-weight:bold;width:100px;text-align:center;">3</div>
<div class="t" style="left:1766px;top:874px;font-size:14px;line-height:20px;color:#333;"><i>南</i><i>极</i><i>人</i><i>轻</i><i>奢</i><i>藏</i><i>青</i><i>色</i><i>连</i><i>衣</i><i>裙</i><i>职</i><i>业</i><i>裙</i><i>上</i><i>班</i><i>工</i><i>装</i><i>时</i><i>装</i>...</div>
<div class="t" style="left:2399.0px;top:870.5px;font-size:16px;line-height:26px;color:#1ea6f0;font-weight:bold;width:100px;text-align:center;">13</div>
<div class="t" style="left:1632.5px;top:921.5px;font-size:14px;line-height:26px;color:#666;width:100px;text-align:center;">4</div>
<div class="t" style="left:1766px;top:925px;font-size:14px;line-height:20px;color:#333;"><i>全</i><i>包</i><i>围</i><i>夏</i><i>季</i><i>冰</i><i>丝</i><i>汽</i><i>车</i><i>坐</i><i>垫</i><i>透</i><i>气</i><i>凉</i><i>席</i><i>凉</i><i>垫</i><i>可</i><i>爱</i><i>四</i>...</div>
<div class="t" style="left:2399.0px;top:921.5px;font-size:14px;line-height:26px;color:#666;width:100px;text-align:center;">11</div>
<div class="t" style="left:1632.5px;top:972.5px;font-size:14px;line-height:26px;color:#666;width:100px;text-align:center;">5</div>
<div class="t" style="left:1766px;top:976px;font-size:14px;line-height:20px;color:#333;"><i>高</i><i>田</i><i>贤</i><i>三</i> KENZO KIDS <i>奢</i><i>侈</i><i>品</i><i>童</i>...</div>
<div class="t" style="left:2399.0px;top:972.5px;font-size:14px;line-height:26px;color:#666;width:100px;text-align:center;">10</div>
<div class="t" style="left:1632.5px;top:1023.5px;font-size:14px;line-height:26px;color:#666;width:100px;text-align:center;">6</div>
<div class="t" style="left:1766px;top:1027px;font-size:14px;line-height:20px;color:#333;"><i>【</i><i>官</i><i>方</i><i>正</i><i>品</i><i>】</i><i>华</i><i>为</i>FreeBuds Pro...</div>
<div class="t" style="left:2399.0px;top:1023.5px;font-size:14px;line-height:26px;color:#666;width:100px;text-align:center;">9</div>
<div class="r" style="left:170px;top:562px;width:1418px;height:265px;background:#fff;"></div>
<div class="r" style="left:180px;top:578.5px;width:8px;height:8px;border-radius:50%;background:#1366e6;"></div>
<div class="t" style="left:192.5px;top:571.4px;font-size:14px;line-height:20px;color:#222;"><i>订</i><i>单</i><i>总</i><i>数</i><i>统</i><i>计</i></div>
<div class="r" style="left:1495px;top:577px;width:12px;height:12px;background:#1366e6;"></div>
<div class="t" style="left:1512px;top:572px;font-size:14px;line-height:20px;color:#333;"><i>订</i><i>单</i><i>数</i><i>量</i></div>
<div class="t" style="left:180px;top:614px;font-size:14px;line-height:20px;color:#ff8143;"><i>今</i><i>日</i></div>
<div class="t" style="left:218px;top:614px;font-size:14px;line-height:20px;color:#444;"><i>昨</i><i>日</i></div>
<div class="t" style="left:256px;top:614px;font-size:14px;line-height:20px;color:#444;"><i>本</i><i>周</i></div>
<div class="t" style="left:294px;top:614px;font-size:14px;line-height:20px;color:#444;"><i>本</i><i>月</i></div>
<div class="r" style="left:1558.5px;top:617px;width:17px;height:3px;background:#666;border-radius:1.5px;"></div>
<div class="r" style="left:1558.5px;top:622px;width:17px;height:3px;background:#666;border-radius:1.5px;"></div>
<div class="r" style="left:1558.5px;top:627px;width:17px;height:3px;background:#666;border-radius:1.5px;"></div>
<svg style="left:0;top:0" width="1600" height="830" viewBox="0 0 1600 830"><path d="M229.5 654.5 H1578.0" stroke="#e6e6e6" stroke-width="1"/><path d="M229.5 687.5 H1578.0" stroke="#e6e6e6" stroke-width="1"/><path d="M229.5 718.5 H1578.0" stroke="#e6e6e6" stroke-width="1"/><path d="M229.5 750.5 H1578.0" stroke="#ccd6eb" stroke-width="1"/><path d="M229.5 750.5 V759.8 M285.5 750.5 V759.8 M341.5 750.5 V759.8 M398.5 750.5 V759.8 M454.5 750.5 V759.8 M510.5 750.5 V759.8 M566.5 750.5 V759.8 M622.5 750.5 V759.8 M679.5 750.5 V759.8 M735.5 750.5 V759.8 M791.5 750.5 V759.8 M847.5 750.5 V759.8 M903.5 750.5 V759.8 M959.5 750.5 V759.8 M1016.5 750.5 V759.8 M1072.5 750.5 V759.8 M1128.5 750.5 V759.8 M1184.5 750.5 V759.8 M1240.5 750.5 V759.8 M1297.5 750.5 V759.8 M1353.5 750.5 V759.8 M1409.5 750.5 V759.8 M1465.5 750.5 V759.8 M1521.5 750.5 V759.8 M1578.5 750.5 V759.8 " stroke="#ccd6eb" stroke-width="1" fill="none"/><rect x="861.8" y="689.5" width="26" height="61" fill="#434348"/><rect x="918.8" y="689.5" width="26" height="61" fill="#434348"/></svg>
<div class="t" style="left:174.5px;top:644px;font-size:11.5px;line-height:20px;color:#666;width:40px;text-align:right;">3</div>
<div class="t" style="left:174.5px;top:675.5px;font-size:11.5px;line-height:20px;color:#666;width:40px;text-align:right;">2</div>
<div class="t" style="left:174.5px;top:707.2px;font-size:11.5px;line-height:20px;color:#666;width:40px;text-align:right;">1</div>
<div class="t" style="left:174.5px;top:739px;font-size:11.5px;line-height:20px;color:#666;width:40px;text-align:right;">0</div>
<div class="t" style="left:164px;top:693.5px;width:60px;text-align:center;font-size:12px;line-height:20px;color:#666;transform:rotate(-90deg);"><i>订</i><i>单</i><i>统</i><i>计</i></div>
<div class="t" style="left:158.3px;top:755.2px;width:100px;text-align:right;font-size:14px;letter-spacing:0.9px;line-height:16px;color:#666;transform-origin:100% 50%;transform:rotate(-45deg);">0:00</div>
<div class="t" style="left:214.5px;top:755.2px;width:100px;text-align:right;font-size:14px;letter-spacing:0.9px;line-height:16px;color:#666;transform-origin:100% 50%;transform:rotate(-45deg);">1:00</div>
<div class="t" style="left:270.7px;top:755.2px;width:100px;text-align:right;font-size:14px;letter-spacing:0.9px;line-height:16px;color:#666;transform-origin:100% 50%;transform:rotate(-45deg);">2:00</div>
<div class="t" style="left:326.9px;top:755.2px;width:100px;text-align:right;font-size:14px;letter-spacing:0.9px;line-height:16px;color:#666;transform-origin:100% 50%;transform:rotate(-45deg);">3:00</div>
<div class="t" style="left:383.0px;top:755.2px;width:100px;text-align:right;font-size:14px;letter-spacing:0.9px;line-height:16px;color:#666;transform-origin:100% 50%;transform:rotate(-45deg);">4:00</div>
<div class="t" style="left:439.2px;top:755.2px;width:100px;text-align:right;font-size:14px;letter-spacing:0.9px;line-height:16px;color:#666;transform-origin:100% 50%;transform:rotate(-45deg);">5:00</div>
<div class="t" style="left:495.4px;top:755.2px;width:100px;text-align:right;font-size:14px;letter-spacing:0.9px;line-height:16px;color:#666;transform-origin:100% 50%;transform:rotate(-45deg);">6:00</div>
<div class="t" style="left:551.6px;top:755.2px;width:100px;text-align:right;font-size:14px;letter-spacing:0.9px;line-height:16px;color:#666;transform-origin:100% 50%;transform:rotate(-45deg);">7:00</div>
<div class="t" style="left:607.8px;top:755.2px;width:100px;text-align:right;font-size:14px;letter-spacing:0.9px;line-height:16px;color:#666;transform-origin:100% 50%;transform:rotate(-45deg);">8:00</div>
<div class="t" style="left:664.0px;top:755.2px;width:100px;text-align:right;font-size:14px;letter-spacing:0.9px;line-height:16px;color:#666;transform-origin:100% 50%;transform:rotate(-45deg);">9:00</div>
<div class="t" style="left:720.2px;top:755.2px;width:100px;text-align:right;font-size:14px;letter-spacing:0.9px;line-height:16px;color:#666;transform-origin:100% 50%;transform:rotate(-45deg);">10:00</div>
<div class="t" style="left:776.4px;top:755.2px;width:100px;text-align:right;font-size:14px;letter-spacing:0.9px;line-height:16px;color:#666;transform-origin:100% 50%;transform:rotate(-45deg);">11:00</div>
<div class="t" style="left:832.5px;top:755.2px;width:100px;text-align:right;font-size:14px;letter-spacing:0.9px;line-height:16px;color:#666;transform-origin:100% 50%;transform:rotate(-45deg);">12:00</div>
<div class="t" style="left:888.7px;top:755.2px;width:100px;text-align:right;font-size:14px;letter-spacing:0.9px;line-height:16px;color:#666;transform-origin:100% 50%;transform:rotate(-45deg);">13:00</div>
<div class="t" style="left:944.9px;top:755.2px;width:100px;text-align:right;font-size:14px;letter-spacing:0.9px;line-height:16px;color:#666;transform-origin:100% 50%;transform:rotate(-45deg);">14:00</div>
<div class="t" style="left:1001.1px;top:755.2px;width:100px;text-align:right;font-size:14px;letter-spacing:0.9px;line-height:16px;color:#666;transform-origin:100% 50%;transform:rotate(-45deg);">15:00</div>
<div class="t" style="left:1057.3px;top:755.2px;width:100px;text-align:right;font-size:14px;letter-spacing:0.9px;line-height:16px;color:#666;transform-origin:100% 50%;transform:rotate(-45deg);">16:00</div>
<div class="t" style="left:1113.5px;top:755.2px;width:100px;text-align:right;font-size:14px;letter-spacing:0.9px;line-height:16px;color:#666;transform-origin:100% 50%;transform:rotate(-45deg);">17:00</div>
<div class="t" style="left:1169.7px;top:755.2px;width:100px;text-align:right;font-size:14px;letter-spacing:0.9px;line-height:16px;color:#666;transform-origin:100% 50%;transform:rotate(-45deg);">18:00</div>
<div class="t" style="left:1225.9px;top:755.2px;width:100px;text-align:right;font-size:14px;letter-spacing:0.9px;line-height:16px;color:#666;transform-origin:100% 50%;transform:rotate(-45deg);">19:00</div>
<div class="t" style="left:1282.0px;top:755.2px;width:100px;text-align:right;font-size:14px;letter-spacing:0.9px;line-height:16px;color:#666;transform-origin:100% 50%;transform:rotate(-45deg);">20:00</div>
<div class="t" style="left:1338.2px;top:755.2px;width:100px;text-align:right;font-size:14px;letter-spacing:0.9px;line-height:16px;color:#666;transform-origin:100% 50%;transform:rotate(-45deg);">21:00</div>
<div class="t" style="left:1394.4px;top:755.2px;width:100px;text-align:right;font-size:14px;letter-spacing:0.9px;line-height:16px;color:#666;transform-origin:100% 50%;transform:rotate(-45deg);">22:00</div>
<div class="t" style="left:1450.6px;top:755.2px;width:100px;text-align:right;font-size:14px;letter-spacing:0.9px;line-height:16px;color:#666;transform-origin:100% 50%;transform:rotate(-45deg);">23:00</div>
<div class="r" style="left:170px;top:837px;width:1418px;height:264px;background:#fff;"></div>
<div class="r" style="left:180px;top:853.5px;width:8px;height:8px;border-radius:50%;background:#1366e6;"></div>
<div class="t" style="left:192.5px;top:846.4px;font-size:14px;line-height:20px;color:#222;"><i>关</i><i>注</i><i>人</i><i>数</i><i>统</i><i>计</i></div>
<div class="r" style="left:1495px;top:852px;width:12px;height:12px;background:#1366e6;"></div>
<div class="t" style="left:1512px;top:847px;font-size:14px;line-height:20px;color:#333;"><i>关</i><i>注</i><i>人</i><i>数</i></div>
<div class="t" style="left:180px;top:889px;font-size:14px;line-height:20px;color:#ff8143;"><i>今</i><i>日</i></div>
<div class="t" style="left:218px;top:889px;font-size:14px;line-height:20px;color:#444;"><i>昨</i><i>日</i></div>
<div class="t" style="left:256px;top:889px;font-size:14px;line-height:20px;color:#444;"><i>本</i><i>周</i></div>
<div class="t" style="left:294px;top:889px;font-size:14px;line-height:20px;color:#444;"><i>本</i><i>月</i></div>
<div class="r" style="left:1558.5px;top:892px;width:17px;height:3px;background:#666;border-radius:1.5px;"></div>
<div class="r" style="left:1558.5px;top:897px;width:17px;height:3px;background:#666;border-radius:1.5px;"></div>
<div class="r" style="left:1558.5px;top:902px;width:17px;height:3px;background:#666;border-radius:1.5px;"></div>
<svg style="left:0;top:0" width="1600" height="1110" viewBox="0 0 1600 1110"><path d="M201.5 989.5 H1578.0" stroke="#e6e6e6" stroke-width="1"/><path d="M201.5 1047.5 H1578.0" stroke="#ccd6eb" stroke-width="1"/><path d="M201.5 1047.5 V1056.8 M258.5 1047.5 V1056.8 M316.5 1047.5 V1056.8 M373.5 1047.5 V1056.8 M430.5 1047.5 V1056.8 M488.5 1047.5 V1056.8 M545.5 1047.5 V1056.8 M602.5 1047.5 V1056.8 M660.5 1047.5 V1056.8 M717.5 1047.5 V1056.8 M775.5 1047.5 V1056.8 M832.5 1047.5 V1056.8 M889.5 1047.5 V1056.8 M947.5 1047.5 V1056.8 M1004.5 1047.5 V1056.8 M1061.5 1047.5 V1056.8 M1119.5 1047.5 V1056.8 M1176.5 1047.5 V1056.8 M1233.5 1047.5 V1056.8 M1291.5 1047.5 V1056.8 M1348.5 1047.5 V1056.8 M1405.5 1047.5 V1056.8 M1463.5 1047.5 V1056.8 M1520.5 1047.5 V1056.8 M1578.5 1047.5 V1056.8 " stroke="#ccd6eb" stroke-width="1" fill="none"/><path d="M230.18 988.8 H1549.32" stroke="#7cb5ec" stroke-width="2"/><circle cx="230.18" cy="988.8" r="4" fill="#7cb5ec"/><circle cx="287.53" cy="988.8" r="4" fill="#7cb5ec"/><circle cx="344.89" cy="988.8" r="4" fill="#7cb5ec"/><circle cx="402.24" cy="988.8" r="4" fill="#7cb5ec"/><circle cx="459.59" cy="988.8" r="4" fill="#7cb5ec"/><circle cx="516.95" cy="988.8" r="4" fill="#7cb5ec"/><circle cx="574.30" cy="988.8" r="4" fill="#7cb5ec"/><circle cx="631.66" cy="988.8" r="4" fill="#7cb5ec"/><circle cx="689.01" cy="988.8" r="4" fill="#7cb5ec"/><circle cx="746.36" cy="988.8" r="4" fill="#7cb5ec"/><circle cx="803.72" cy="988.8" r="4" fill="#7cb5ec"/><circle cx="861.07" cy="988.8" r="4" fill="#7cb5ec"/><circle cx="918.43" cy="988.8" r="4" fill="#7cb5ec"/><circle cx="975.78" cy="988.8" r="4" fill="#7cb5ec"/><circle cx="1033.14" cy="988.8" r="4" fill="#7cb5ec"/><circle cx="1090.49" cy="988.8" r="4" fill="#7cb5ec"/><circle cx="1147.84" cy="988.8" r="4" fill="#7cb5ec"/><circle cx="1205.20" cy="988.8" r="4" fill="#7cb5ec"/><circle cx="1262.55" cy="988.8" r="4" fill="#7cb5ec"/><circle cx="1319.91" cy="988.8" r="4" fill="#7cb5ec"/><circle cx="1377.26" cy="988.8" r="4" fill="#7cb5ec"/><circle cx="1434.61" cy="988.8" r="4" fill="#7cb5ec"/><circle cx="1491.97" cy="988.8" r="4" fill="#7cb5ec"/><circle cx="1549.32" cy="988.8" r="4" fill="#7cb5ec"/></svg>
<div class="t" style="left:180px;top:976.8px;font-size:11.5px;line-height:20px;color:#666;">0</div>
<div class="t" style="left:200.17708333333334px;top:1052.7px;font-size:12px;line-height:20px;color:#666;width:60px;text-align:center;letter-spacing:0.3px;">0:00</div>
<div class="t" style="left:257.53125px;top:1052.7px;font-size:12px;line-height:20px;color:#666;width:60px;text-align:center;letter-spacing:0.3px;">1:00</div>
<div class="t" style="left:314.88541666666663px;top:1052.7px;font-size:12px;line-height:20px;color:#666;width:60px;text-align:center;letter-spacing:0.3px;">2:00</div>
<div class="t" style="left:372.2395833333333px;top:1052.7px;font-size:12px;line-height:20px;color:#666;width:60px;text-align:center;letter-spacing:0.3px;">3:00</div>
<div class="t" style="left:429.59375px;top:1052.7px;font-size:12px;line-height:20px;color:#666;width:60px;text-align:center;letter-spacing:0.3px;">4:00</div>
<div class="t" style="left:486.94791666666663px;top:1052.7px;font-size:12px;line-height:20px;color:#666;width:60px;text-align:center;letter-spacing:0.3px;">5:00</div>
<div class="t" style="left:544.3020833333333px;top:1052.7px;font-size:12px;line-height:20px;color:#666;width:60px;text-align:center;letter-spacing:0.3px;">6:00</div>
<div class="t" style="left:601.65625px;top:1052.7px;font-size:12px;line-height:20px;color:#666;width:60px;text-align:center;letter-spacing:0.3px;">7:00</div>
<div class="t" style="left:659.0104166666666px;top:1052.7px;font-size:12px;line-height:20px;color:#666;width:60px;text-align:center;letter-spacing:0.3px;">8:00</div>
<div class="t" style="left:716.3645833333333px;top:1052.7px;font-size:12px;line-height:20px;color:#666;width:60px;text-align:center;letter-spacing:0.3px;">9:00</div>
<div class="t" style="left:773.71875px;top:1052.7px;font-size:12px;line-height:20px;color:#666;width:60px;text-align:center;letter-spacing:0.3px;">10:00</div>
<div class="t" style="left:831.0729166666666px;top:1052.7px;font-size:12px;line-height:20px;color:#666;width:60px;text-align:center;letter-spacing:0.3px;">11:00</div>
<div class="t" style="left:888.4270833333333px;top:1052.7px;font-size:12px;line-height:20px;color:#666;width:60px;text-align:center;letter-spacing:0.3px;">12:00</div>
<div class="t" style="left:945.78125px;top:1052.7px;font-size:12px;line-height:20px;color:#666;width:60px;text-align:center;letter-spacing:0.3px;">13:00</div>
<div class="t" style="left:1003.1354166666665px;top:1052.7px;font-size:12px;line-height:20px;color:#666;width:60px;text-align:center;letter-spacing:0.3px;">14:00</div>
<div class="t" style="left:1060.4895833333333px;top:1052.7px;font-size:12px;line-height:20px;color:#666;width:60px;text-align:center;letter-spacing:0.3px;">15:00</div>
<div class="t" style="left:1117.84375px;top:1052.7px;font-size:12px;line-height:20px;color:#666;width:60px;text-align:center;letter-spacing:0.3px;">16:00</div>
<div class="t" style="left:1175.1979166666665px;top:1052.7px;font-size:12px;line-height:20px;color:#666;width:60px;text-align:center;letter-spacing:0.3px;">17:00</div>
<div class="t" style="left:1232.5520833333333px;top:1052.7px;font-size:12px;line-height:20px;color:#666;width:60px;text-align:center;letter-spacing:0.3px;">18:00</div>
<div class="t" style="left:1289.90625px;top:1052.7px;font-size:12px;line-height:20px;color:#666;width:60px;text-align:center;letter-spacing:0.3px;">19:00</div>
<div class="t" style="left:1347.2604166666665px;top:1052.7px;font-size:12px;line-height:20px;color:#666;width:60px;text-align:center;letter-spacing:0.3px;">20:00</div>
<div class="t" style="left:1404.6145833333333px;top:1052.7px;font-size:12px;line-height:20px;color:#666;width:60px;text-align:center;letter-spacing:0.3px;">21:00</div>
<div class="t" style="left:1461.96875px;top:1052.7px;font-size:12px;line-height:20px;color:#666;width:60px;text-align:center;letter-spacing:0.3px;">22:00</div>
<div class="t" style="left:1519.3229166666665px;top:1052.7px;font-size:12px;line-height:20px;color:#666;width:60px;text-align:center;letter-spacing:0.3px;">23:00</div>
<div class="r" style="left:170px;top:1112px;width:2363px;height:153px;background:#fff;"></div>
<svg style="left:180px;top:1126px" width="12" height="12" viewBox="0 0 12 12"><path fill="#222" d="M5 0 H7 L7.4 1.6 L8.6 2.1 L10 1.2 L11.4 2.6 L10.5 4 L11 5.2 L12 5.5 V7.1 L10.9 7.4 L10.4 8.6 L11.2 10 L9.8 11.4 L8.4 10.5 L7.3 11 L7 12 H5 L4.6 10.9 L3.5 10.4 L2.1 11.3 L0.7 9.9 L1.5 8.5 L1 7.4 L0 7.1 V5.1 L1.1 4.8 L1.6 3.6 L0.7 2.2 L2.1 0.8 L3.5 1.6 L4.7 1.2 Z M6 3.9 A2.1 2.1 0 1 0 6 8.1 A2.1 2.1 0 1 0 6 3.9 Z" fill-rule="evenodd"/></svg>
<div class="t" style="left:195px;top:1122px;font-size:14px;line-height:20px;color:#333;"><i>系</i><i>统</i><i>信</i><i>息</i></div>
<div class="r" style="left:194px;top:1172px;width:2315px;height:93px;background:#fff;"></div>
<div class="r" style="left:194px;top:1172px;width:347px;height:93px;background:#f7f7f7;"></div>
<div class="r" style="left:1466px;top:1172px;width:347px;height:93px;background:#f7f7f7;"></div>
<div class="r" style="left:194px;top:1172px;width:2315px;height:1px;background:#e6e6e6;"></div>
<div class="r" style="left:194px;top:1213px;width:2315px;height:1px;background:#e6e6e6;"></div>
<div class="r" style="left:194px;top:1254px;width:2315px;height:1px;background:#e6e6e6;"></div>
<div class="r" style="left:194px;top:1172px;width:1px;height:93px;background:#e6e6e6;"></div>
<div class="r" style="left:541px;top:1172px;width:1px;height:93px;background:#e6e6e6;"></div>
<div class="r" style="left:1466px;top:1172px;width:1px;height:93px;background:#e6e6e6;"></div>
<div class="r" style="left:1813px;top:1172px;width:1px;height:93px;background:#e6e6e6;"></div>
<div class="r" style="left:2508px;top:1172px;width:1px;height:93px;background:#e6e6e6;"></div>
<div class="t" style="left:131px;top:1183px;font-size:14px;line-height:20px;color:#666;width:400px;text-align:right;"><i>服</i><i>务</i><i>器</i><i>操</i><i>作</i><i>系</i><i>统</i></div>
<div class="t" style="left:552px;top:1182.5px;font-size:14.5px;line-height:20px;color:#666;">Linux C20240326104776 3.10.0-957.1.3.el7.x86_64 #1 SMP Thu Nov 29 14:49:43 UTC 2018 x86_64</div>
<div class="t" style="left:131px;top:1224px;font-size:14px;line-height:20px;color:#666;width:400px;text-align:right;"><i>服</i><i>务</i><i>器</i><i>环</i><i>境</i></div>
<div class="t" style="left:552px;top:1223.5px;font-size:14.5px;line-height:20px;color:#666;">nginx/1.20.1</div>
<div class="t" style="left:1403px;top:1183px;font-size:14px;line-height:20px;color:#666;width:400px;text-align:right;"><i>服</i><i>务</i><i>器</i><i>域</i><i>名</i></div>
<div class="t" style="left:1403px;top:1224px;font-size:14px;line-height:20px;color:#666;width:400px;text-align:right;">PHP<i>版</i><i>本</i></div>
<div class="t" style="left:1824px;top:1223.5px;font-size:14.5px;line-height:20px;color:#666;">7.3.29</div>
</body>
</html>
